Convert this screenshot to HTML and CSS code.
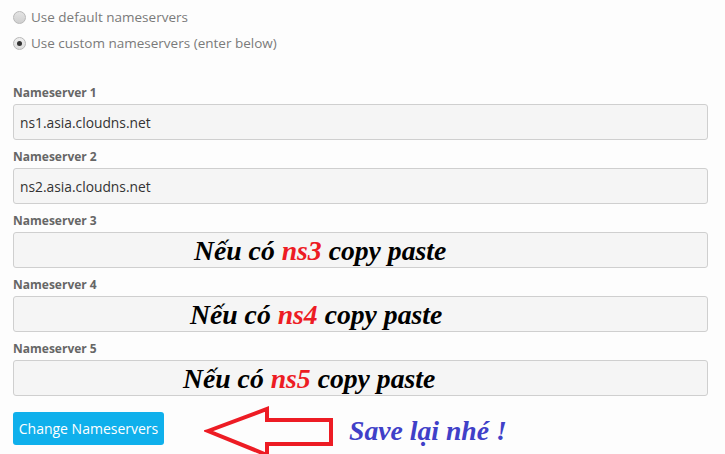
FILE: index.html
```html
<!DOCTYPE html>
<html>
<head>
<meta charset="utf-8">
<link rel="stylesheet" href="styles.css">
</head>
<body>
<div class="page">
  <div class="radios">
    <div class="radio-row"><span class="radio"></span><span class="radio-text">Use default nameservers</span></div>
    <div class="radio-row"><span class="radio checked"></span><span class="radio-text">Use custom nameservers (enter below)</span></div>
  </div>
  <div class="fields">
    <div class="group">
      <div class="label">Nameserver 1</div>
      <div class="field"><span class="value">ns1.asia.cloudns.net</span></div>
    </div>
    <div class="group">
      <div class="label">Nameserver 2</div>
      <div class="field"><span class="value">ns2.asia.cloudns.net</span></div>
    </div>
    <div class="group">
      <div class="label">Nameserver 3</div>
      <div class="field note n3"><span class="big">Nếu có <span class="red">ns3</span> copy paste</span></div>
    </div>
    <div class="group">
      <div class="label">Nameserver 4</div>
      <div class="field note n4"><span class="big">Nếu có <span class="red">ns4</span> copy paste</span></div>
    </div>
    <div class="group">
      <div class="label">Nameserver 5</div>
      <div class="field note n5"><span class="big">Nếu có <span class="red">ns5</span> copy paste</span></div>
    </div>
  </div>
  <div class="actions">
    <button class="btn">Change Nameservers</button>
    <svg class="arrow" width="132" height="54" viewBox="0 0 132 54">
      <polygon points="4,25 63,3 63,14 127,14 127,38 63,38 63,49" fill="none" stroke="#ed1c24" stroke-width="4" stroke-linejoin="miter"/>
    </svg>
    <span class="save">Save lại nhé !</span>
  </div>
</div>
</body>
</html>
```
FILE: styles.css
```css
html, body {
  margin: 0;
  padding: 0;
  background: #fdfdfd;
}
.page {
  padding: 4px 17px 0 13px;
  font-family: "Open Sans", "DejaVu Sans", sans-serif;
}
.radios {
  display: flex;
  flex-direction: column;
}
.radio-row {
  display: flex;
  align-items: center;
  height: 26px;
}
.radio {
  width: 11px;
  height: 11px;
  border-radius: 50%;
  border: 1px solid #b8b8b8;
  background: linear-gradient(#e4e4e4, #cfcfcf);
  margin-right: 5px;
  position: relative;
  box-sizing: content-box;
}
.radio.checked {
  background: linear-gradient(#f0f0f0, #dcdcdc);
}
.radio.checked::after {
  content: "";
  position: absolute;
  left: 3px;
  top: 3px;
  width: 5px;
  height: 5px;
  border-radius: 50%;
  background: #333;
}
.radio-text {
  font-size: 13.5px;
  color: #7a7a7a;
}
.fields {
  margin-top: 28px;
  display: flex;
  flex-direction: column;
  gap: 8px;
}
.group {
  display: flex;
  flex-direction: column;
  gap: 2px;
}
.label {
  font-size: 12px;
  font-weight: bold;
  color: #666;
  line-height: 18px;
}
.field {
  height: 36px;
  box-sizing: border-box;
  border: 1px solid #cfcfcf;
  border-radius: 3px;
  background: #f5f5f5;
  display: flex;
  align-items: center;
  padding-left: 6px;
}
.value {
  font-size: 13.8px;
  color: #333;
}
.note {
  align-items: flex-start;
}
.big {
  font-family: "Liberation Serif", "Times New Roman", serif;
  font-weight: bold;
  font-style: italic;
  font-size: 27.7px;
  line-height: 36px;
  color: #000;
}
.red {
  color: #ed1c24;
}
.n3 { padding-left: 180px; }
.n4 { padding-left: 176px; }
.n5 { padding-left: 169px; }
.actions {
  margin-top: 16px;
  display: flex;
  align-items: flex-start;
}
.btn {
  width: 151px;
  height: 33px;
  border: none;
  border-radius: 3px;
  background: #0fb0ec;
  color: #fff;
  font-family: "Open Sans", "DejaVu Sans", sans-serif;
  font-size: 14px;
  padding: 0;
}
.arrow {
  margin-left: 40px;
  margin-top: -6px;
}
.save {
  margin-left: 13px;
  font-family: "Liberation Serif", "Times New Roman", serif;
  font-weight: bold;
  font-style: italic;
  font-size: 27.7px;
  color: #4040c8;
  margin-top: 3px;
}
```
